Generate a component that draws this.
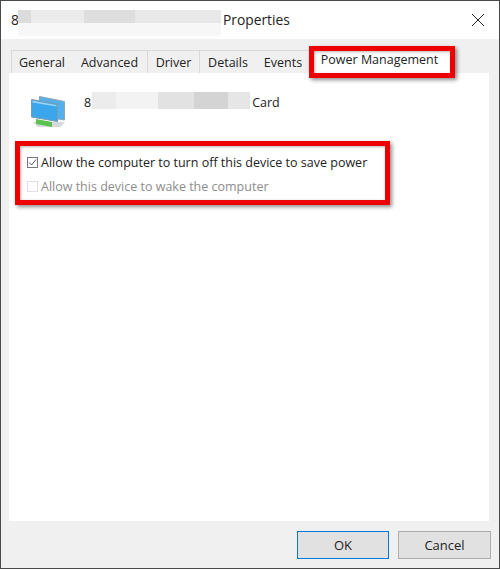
<script>
  const tabs = ['General', 'Advanced', 'Driver', 'Details', 'Events'];
</script>

<div class="window">
  <header class="titlebar">
    <span class="title-start">8</span>
    <span class="blur title-blur">
      <span class="row r1"><i class="b1"></i><i class="b2"></i><i class="b3"></i><i class="b4"></i></span>
      <span class="row r2"></span>
    </span>
    <span class="title-end">Properties</span>
    <svg class="close" viewBox="0 0 14 14" width="14" height="14" aria-hidden="true">
      <path d="M1 1 13 13M13 1 1 13" stroke="#222" stroke-width="1" fill="none" />
    </svg>
  </header>

  <main class="body">
    <nav class="tabs">
      <div class="tab-group">
        <span class="tab general">{tabs[0]}</span>
        <span class="tab advanced">{tabs[1]}</span>
        <span class="tab driver">{tabs[2]}</span>
        <span class="tab details">{tabs[3]}</span>
        <span class="tab events">{tabs[4]}</span>
      </div>
      <span class="tab active">Power Management</span>
      <span class="highlight tab-highlight"></span>
    </nav>

    <section class="panel">
      <div class="device">
        <svg class="icon" viewBox="0 0 36 34" width="36" height="34" aria-hidden="true">
          <path d="M3 28 35 28 30 33 8 33Z" fill="#d5d9db" />
          <path d="M9.500 2.500 34.500 7.500 34.500 26 9.500 22Z" fill="#54b0ea" stroke="#8fa3b3" />
          <path d="M1.500 5.500 27.500 10 27.500 27.500 1.500 23Z" fill="#3aa6ec" stroke="#7f9aae" />
          <path d="M2.500 6.800 26.500 10.900 26.500 12.500 2.500 8.400Z" fill="#9ad4f6" />
          <path d="M6 25 22 28 22 33 6 30Z" fill="#5cc24e" />
        </svg>
        <div class="device-name">
          <span class="name-text">8</span>
          <span class="blur name-blur">
            <i class="n1"></i><i class="n2"></i><i class="n3"></i><i class="n4"></i><i class="n5"></i>
          </span>
          <span class="name-text">Card</span>
        </div>
      </div>

      <div class="options">
        <label class="option">
          <span class="check">
            <svg viewBox="0 0 9 9" width="9" height="9" aria-hidden="true">
              <path d="M1 4.500 3.500 7 8 1.500" fill="none" stroke="#555" stroke-width="1" />
            </svg>
          </span>
          <span>Allow the computer to turn off this device to save power</span>
        </label>
        <label class="option disabled">
          <span class="check"></span>
          <span>Allow this device to wake the computer</span>
        </label>
        <span class="highlight options-highlight"></span>
      </div>
    </section>

    <footer class="actions">
      <button class="default">OK</button>
      <button>Cancel</button>
    </footer>
  </main>
</div>

<style>
  :global(body) {
    margin: 0;
    background: #fff;
  }

  .window {
    box-sizing: border-box;
    width: 500px;
    height: 569px;
    border: 1px solid #4a4a4a;
    display: flex;
    flex-direction: column;
    font-family: "Open Sans", "Noto Sans", sans-serif;
    font-size: 12.5px;
    color: #222;
    background: #fff;
  }

  .titlebar {
    flex: 0 0 38px;
    display: flex;
    align-items: center;
    padding: 0 0 2px 10px;
    box-sizing: border-box;
    font-size: 13.8px;
    position: relative;
  }

  .title-start {
    width: 7px;
  }

  .title-blur {
    width: 203px;
    height: 26px;
    margin: 8px 2px 0 0;
    display: flex;
    flex-direction: column;
  }

  .row {
    display: flex;
    height: 13px;
  }

  .row.r2 {
    background: #f7f7f7;
  }

  .row i {
    display: block;
    height: 100%;
  }

  .b1 { width: 13px; background: #dcdcdc; }
  .b2 { width: 53px; background: #ebebeb; }
  .b3 { width: 51px; background: #dedede; }
  .b4 { width: 86px; background: #e8e8e8; }

  .close {
    position: absolute;
    right: 14px;
    top: 12px;
  }

  .body {
    flex: 1;
    min-height: 0;
    background: #f0f0f0;
    display: flex;
    flex-direction: column;
    padding: 10px 9px 0 8px;
  }

  .tabs {
    display: flex;
    align-items: flex-end;
    height: 24px;
    position: relative;
    z-index: 1;
  }

  .tab-group {
    display: flex;
    height: 23px;
    margin-left: 2px;
    border: 1px solid #d9d9d9;
    border-bottom: 0;
    box-sizing: border-box;
  }

  .tab {
    display: flex;
    align-items: center;
    justify-content: center;
    box-sizing: border-box;
    background: #f0f0f0;
  }

  .general { width: 60px; }
  .advanced { width: 76px; border-right: 1px solid #d9d9d9; }
  .driver { width: 52px; border-right: 1px solid #d9d9d9; }
  .details { width: 56px; }
  .events { width: 54px; }

  .active {
    width: 145px;
    height: 24px;
    background: #fff;
    padding: 0 6px 4px 0;
    margin-left: -1px;
  }

  .highlight {
    position: absolute;
    box-sizing: border-box;
    border: 5px solid #ee0000;
    box-shadow: 2px 2px 4px rgba(0, 0, 0, 0.45), inset 1px 1px 3px rgba(0, 0, 0, 0.3);
    pointer-events: none;
  }

  .tab-highlight {
    left: 300px;
    top: -3px;
    width: 146px;
    height: 32px;
  }

  .panel {
    height: 448px;
    margin-right: 1px;
    background: #fff;
  }

  .device {
    display: flex;
    padding: 21px 0 0 21px;
    height: 36px;
  }

  .icon {
    margin-right: 18px;
  }

  .device-name {
    display: flex;
    align-items: flex-start;
    line-height: 18px;
    margin-top: -2px;
  }

  .name-text {
    padding-top: 2px;
  }

  .name-blur {
    width: 158px;
    height: 17px;
    margin: 0 2px 0 1px;
    display: flex;
  }

  .name-blur i {
    display: block;
    height: 100%;
  }

  .n1 { width: 24px; background: #ececec; }
  .n2 { width: 42px; background: #f3f3f3; }
  .n3 { width: 36px; background: #e2e2e2; }
  .n4 { width: 34px; background: #d4d4d4; }
  .n5 { width: 22px; background: #e6e6e6; }

  .options {
    position: relative;
    margin: 23px 0 0 18px;
    display: flex;
    flex-direction: column;
    gap: 6px;
  }

  .option {
    display: flex;
    align-items: center;
    height: 18px;
    gap: 3px;
  }

  .disabled {
    color: #8c8c8c;
  }

  .check {
    box-sizing: border-box;
    width: 11px;
    height: 11px;
    border: 1px solid #777;
    display: flex;
    align-items: center;
    justify-content: center;
    background: #fff;
  }

  .check svg {
    display: block;
  }

  .disabled .check {
    border-color: #e0e0e0;
  }

  .options-highlight {
    left: -12px;
    top: -12px;
    width: 375px;
    height: 64px;
  }

  .actions {
    display: flex;
    justify-content: flex-end;
    gap: 9px;
    padding-top: 10px;
    margin-right: -1px;
  }

  button {
    width: 93px;
    height: 28px;
    box-sizing: border-box;
    border: 1px solid #adadad;
    background: #e1e1e1;
    font: inherit;
    font-size: 13px;
    color: #222;
    padding: 0;
  }

  button.default {
    width: 92px;
    border: 1px solid #0078d7;
  }
</style>
